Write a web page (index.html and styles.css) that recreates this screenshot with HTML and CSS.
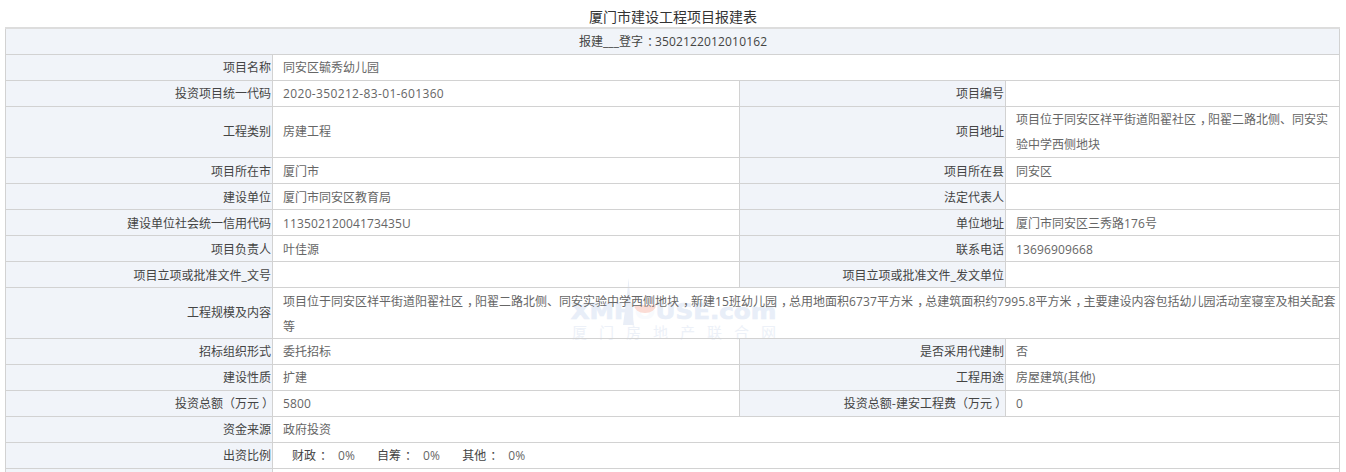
FILE: index.html
```html
<!DOCTYPE html>
<html lang="zh-CN">
<head>
<meta charset="utf-8">
<title>厦门市建设工程项目报建表</title>
<link rel="stylesheet" href="styles.css">
</head>
<body>
<div class="title">厦门市建设工程项目报建表</div>
<div class="sheet">
<div class="mark">
<div class="mark-en">XMH<span class="mark-o">O</span>USE.com</div>
<svg class="mark-art" viewBox="0 0 50 50" width="50" height="50"><path d="M11 50 L15 20 L16.5 3 L18 20 L22 50Z" fill="#e9eef7"/><path d="M22 30h22a11 8 0 0 1-22 0Z" fill="#fbdcd5"/></svg>
<div class="mark-cn">厦门房地产联合网</div>
</div>
<table class="report">
<colgroup><col class="c1"><col class="c2"><col class="c3"><col class="c4"></colgroup>
<tr class="up"><td class="head" colspan="4">报建<span class="num">___</span>登字<span class="pc">：</span><span class="num">3502122012010162</span></td></tr>
<tr class="up"><th>项目名称</th><td colspan="3">同安区毓秀幼儿园</td></tr>
<tr class="up"><th>投资项目统一代码</th><td><span class="num code">2020-350212-83-01-601360</span></td><th>项目编号</th><td></td></tr>
<tr class="tall"><th>工程类别</th><td>房建工程</td><th>项目地址</th><td class="lines">项目位于同安区祥平街道阳翟社区<span class="pc">，</span>阳翟二路北侧、同安实验中学西侧地块</td></tr>
<tr><th>项目所在市</th><td>厦门市</td><th>项目所在县</th><td>同安区</td></tr>
<tr><th>建设单位</th><td>厦门市同安区教育局</td><th>法定代表人</th><td></td></tr>
<tr><th>建设单位社会统一信用代码</th><td><span class="num">11350212004173435U</span></td><th>单位地址</th><td>厦门市同安区三秀路<span class="num">176</span>号</td></tr>
<tr><th>项目负责人</th><td>叶佳源</td><th>联系电话</th><td><span class="num">13696909668</span></td></tr>
<tr><th>项目立项或批准文件<span class="num">_</span>文号</th><td></td><th>项目立项或批准文件<span class="num">_</span>发文单位</th><td></td></tr>
<tr class="tall"><th>工程规模及内容</th><td colspan="3">项目位于同安区祥平街道阳翟社区<span class="pc">，</span>阳翟二路北侧、同安实验中学西侧地块<span class="pc">，</span>新建<span class="num">15</span>班幼儿园<span class="pc">，</span>总用地面积<span class="num">6737</span>平方米<span class="pc">，</span>总建筑面积约<span class="num">7995.8</span>平方米<span class="pc">，</span>主要建设内容包括幼儿园活动室寝室及相关配套等</td></tr>
<tr class="up"><th>招标组织形式</th><td>委托招标</td><th>是否采用代建制</th><td>否</td></tr>
<tr class="up"><th>建设性质</th><td>扩建</td><th>工程用途</th><td>房屋建筑<span class="num">(</span>其他<span class="num">)</span></td></tr>
<tr class="up"><th>投资总额<span class="pl">（</span>万元<span class="pr">）</span></th><td><span class="num">5800</span></td><th>投资总额-建安工程费<span class="pl">（</span>万元<span class="pr">）</span></th><td><span class="num">0</span></td></tr>
<tr class="up"><th>资金来源</th><td colspan="3">政府投资</td></tr>
<tr class="up"><th>出资比例</th><td colspan="3"><span class="ratio"><b>财政<span class="pc">：</span></b><span class="num">0%</span></span><span class="ratio"><b>自筹<span class="pc">：</span></b><span class="num">0%</span></span><span class="ratio"><b>其他<span class="pc">：</span></b><span class="num">0%</span></span></td></tr>
<tr><th class="tail"></th><td class="tail" colspan="3"></td></tr>
</table>
</div>
</body>
</html>
```
FILE: styles.css
```css
html, body { margin: 0; padding: 0; height: 472px; overflow: hidden; background: #fff; }
body { font-family: "Noto Sans CJK SC", "Noto Sans", sans-serif; font-size: 12px; color: #333; }
.title { height: 27px; line-height: 32px; text-align: center; font-size: 14px; color: #333; }
.sheet { position: relative; margin: 0 6px 0 5px; }
.report { position: relative; width: 1334px; table-layout: fixed; border-collapse: collapse; border-top: 2px solid #ddd; }
.c1 { width: 267px; }
.c2 { width: 467px; }
.c3 { width: 266px; }
.c4 { width: 334px; }
th, td { border: 1px solid #d2d2d2; line-height: 25px; padding: 0 2px 0 10px; height: 25px; font-weight: normal; word-break: break-all; }
th { background: #f1f4f9; text-align: right; padding: 0 1px 0 0; color: #444; }
td { color: #666; }
.up th, .up td { line-height: 23px; padding-bottom: 2px; height: 23px; }
.tall th, .tall td { padding-bottom: 3px; }
.tall .lines, .tall td[colspan] { padding-bottom: 0; }
.tall .lines { line-height: 24.5px; padding-bottom: 1px; }
.up .head { padding-right: 9px; background: #f1f4f9; text-align: center; color: #444; }
.num { font-family: "Open Sans", sans-serif; letter-spacing: 0.14px; line-height: 0; }
.code { letter-spacing: 0.35px; }
.pc, .pl, .pr { display: inline-block; width: 12px; line-height: 0; white-space: nowrap; }
.pc { text-indent: 4px; }
.pl { text-indent: -3px; }
.pr { text-indent: 3px; }
.ratio { margin-left: 9px; margin-right: 13px; }
.ratio b { font-weight: normal; color: #444; margin-right: 10px; }
.tail { height: 25px; }
.mark { position: absolute; left: 566px; top: 248px; width: 213px; height: 64px; }
.mark-art { position: absolute; left: 41px; top: 0; }
.mark-en { position: absolute; left: -4px; width: 213px; top: 25px; text-align: center; font: bold 21px/24px "DejaVu Sans", sans-serif; color: #e8eef8; -webkit-text-stroke: 0.6px #e8eef8; transform: scaleX(1.17); white-space: nowrap; }
.mark-o { color: #f8fafd; -webkit-text-stroke: 0; }
.mark-cn { position: absolute; left: 1px; top: 47px; font-size: 15px; line-height: 20px; letter-spacing: 12px; color: #edf1f8; white-space: nowrap; }
```
